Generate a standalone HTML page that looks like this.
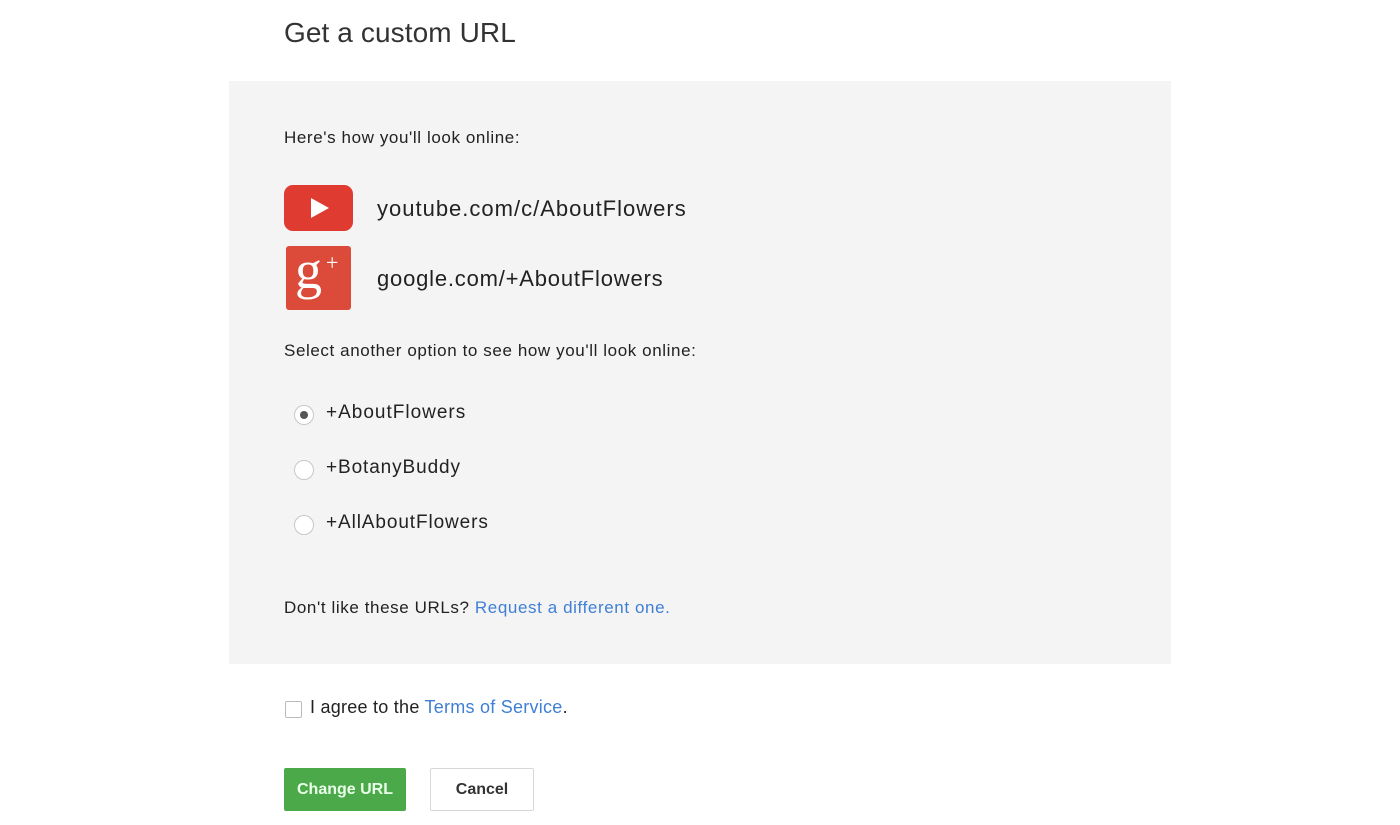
<!DOCTYPE html>
<html><head><style>
body{margin:0;width:1400px;height:825px;background:#fff;font-family:"Liberation Sans",sans-serif;color:#222;position:relative;overflow:hidden}
.a{position:absolute;white-space:nowrap}
.panel{position:absolute;left:229px;top:81px;width:942px;height:583px;background:#f4f4f4}
.blue{color:#3f7fd4}
.radio{position:absolute;width:20px;height:20px;border:1px solid #c8c8c8;border-radius:50%;background:#fff;box-sizing:border-box}
</style></head><body>
<div class="a" style="left:284px;top:17px;font-size:28px;color:#333;letter-spacing:0.1px">Get a custom URL</div>
<div class="panel"></div>
<div class="a" style="left:284px;top:128px;font-size:17px;letter-spacing:0.6px">Here's how you'll look online:</div>
<div class="a" style="left:284px;top:185px;width:69px;height:46px;background:#df3b30;border-radius:9px">
<svg width="69" height="46"><polygon points="27,13 27,33 45,23" fill="#fff"/></svg></div>
<div class="a" style="left:377px;top:196px;font-size:22px;letter-spacing:1px">youtube.com/c/AboutFlowers</div>
<div class="a" style="left:286px;top:246px;width:65px;height:64px;background:#dc4a3a;border-radius:3px;color:#fff;font-family:'Liberation Serif',serif">
<span style="position:absolute;left:9px;top:-4px;font-size:54px;line-height:56px">g</span>
<span style="position:absolute;left:40px;top:6px;font-size:22px;line-height:22px">+</span></div>
<div class="a" style="left:377px;top:266px;font-size:22px;letter-spacing:0.8px">google.com/+AboutFlowers</div>
<div class="a" style="left:284px;top:341px;font-size:17px;letter-spacing:0.6px">Select another option to see how you'll look online:</div>
<div class="radio" style="left:294px;top:405px"><div style="position:absolute;left:5px;top:5px;width:8px;height:8px;border-radius:50%;background:#555"></div></div>
<div class="a" style="left:326px;top:402px;font-size:19px;letter-spacing:1px">+AboutFlowers</div>
<div class="radio" style="left:294px;top:460px"></div>
<div class="a" style="left:326px;top:457px;font-size:19px;letter-spacing:0.9px">+BotanyBuddy</div>
<div class="radio" style="left:294px;top:515px"></div>
<div class="a" style="left:326px;top:512px;font-size:19px;letter-spacing:0.9px">+AllAboutFlowers</div>
<div class="a" style="left:284px;top:598px;font-size:17px;letter-spacing:0.6px">Don't like these URLs? <span class="blue">Request a different one.</span></div>
<div class="a" style="left:285px;top:701px;width:17px;height:17px;border:1px solid #bbb;box-sizing:border-box;border-radius:2px"></div>
<div class="a" style="left:310px;top:697px;font-size:18px;letter-spacing:0.25px">I agree to the <span class="blue">Terms of Service</span>.</div>
<div class="a" style="left:284px;top:768px;width:122px;height:43px;background:#4ca94a;border-radius:2px;color:#eaffea;font-weight:bold;font-size:16px;line-height:43px;text-align:center">Change URL</div>
<div class="a" style="left:430px;top:768px;width:104px;height:43px;border:1px solid #d8d8d8;box-sizing:border-box;border-radius:2px;color:#333;font-weight:bold;font-size:16px;line-height:41px;text-align:center">Cancel</div>
</body></html>
